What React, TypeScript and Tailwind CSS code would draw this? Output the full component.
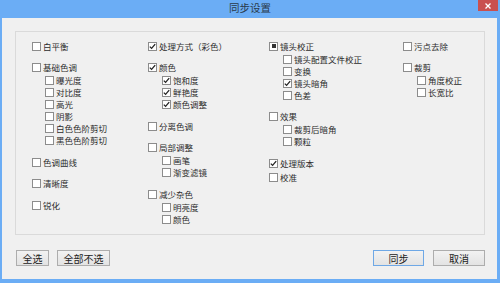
import React from "react";

// 同步设置 dialog (Windows 8 style)

type State = "on" | "off" | "mixed";

type Item = {
  label: string;
  state?: State;
  children?: { label: string; state?: State }[];
  tight?: boolean;
};

const columns: Item[][] = [
  [
    { label: "白平衡" },
    {
      label: "基础色调",
      children: [
        { label: "曝光度" },
        { label: "对比度" },
        { label: "高光" },
        { label: "阴影" },
        { label: "白色色阶剪切" },
        { label: "黑色色阶剪切" },
      ],
    },
    { label: "色调曲线" },
    { label: "清晰度" },
    { label: "锐化" },
  ],
  [
    { label: "处理方式（彩色）", state: "on" },
    {
      label: "颜色",
      state: "on",
      children: [
        { label: "饱和度", state: "on" },
        { label: "鲜艳度", state: "on" },
        { label: "颜色调整", state: "on" },
      ],
    },
    { label: "分离色调" },
    { label: "局部调整", children: [{ label: "画笔" }, { label: "渐变滤镜" }] },
    { label: "减少杂色", children: [{ label: "明亮度" }, { label: "颜色" }] },
  ],
  [
    {
      label: "镜头校正",
      state: "mixed",
      children: [
        { label: "镜头配置文件校正" },
        { label: "变换" },
        { label: "镜头暗角", state: "on" },
        { label: "色差" },
      ],
    },
    { label: "效果", children: [{ label: "裁剪后暗角" }, { label: "颗粒" }] },
    { label: "处理版本", state: "on" },
    { label: "校准", tight: true },
  ],
  [
    { label: "污点去除" },
    { label: "裁剪", children: [{ label: "角度校正" }, { label: "长宽比" }] },
  ],
];

function Box({ state = "off" }: { state?: State }) {
  return (
    <span className="flex h-[9px] w-[9px] shrink-0 items-center justify-center border border-[#8c8c8c] bg-white">
      {state === "on" && (
        <svg width="7" height="7" viewBox="0 0 7 7">
          <path d="M0.8 3.6 L2.6 5.4 L6.2 1.2" fill="none" stroke="#222" strokeWidth="1.3" />
        </svg>
      )}
      {state === "mixed" && <span className="h-[4px] w-[4px] bg-[#333]" />}
    </span>
  );
}

function Row({ label, state }: { label: string; state?: State }) {
  return (
    <div className="flex h-[12px] items-center gap-[2px] whitespace-nowrap text-[8.5px] text-[#2c2c2c]">
      <Box state={state} />
      <span>{label}</span>
    </div>
  );
}

function Button({ label, primary, w }: { label: string; primary?: boolean; w: string }) {
  return (
    <div
      className={`flex h-[16px] items-center justify-center border bg-gradient-to-b from-[#f2f2f2] to-[#e3e3e3] text-[10px] text-[#222] ${w} ${
        primary ? "border-[#6ea8e6]" : "border-[#adadad]"
      }`}
    >
      {label}
    </div>
  );
}

export default function App() {
  return (
    <div
      className="flex h-[283px] w-[500px] flex-col bg-[#6badf5]"
      style={{ fontFamily: '"Noto Sans CJK SC", "Noto Sans", sans-serif' }}
    >
      {/* title bar */}
      <div className="relative flex h-[18px] shrink-0 items-start justify-center">
        <span className="mt-[1px] text-[10.5px] leading-[14px] text-[#2a3a4a]">同步设置</span>
        <div className="absolute right-[2px] top-0 flex h-[11px] w-[20px] items-center justify-center bg-[#c9504f]">
          <svg width="6" height="6" viewBox="0 0 6 6">
            <path d="M0.5 0.5 L5.5 5.5 M5.5 0.5 L0.5 5.5" stroke="#fff" strokeWidth="1.3" />
          </svg>
        </div>
      </div>

      {/* body */}
      <div className="mx-[2px] mb-[4px] mr-[3px] flex flex-1 flex-col bg-[#f0f0f0] px-[13px] pt-[13px]">
        <div className="grid h-[204px] w-[470px] grid-cols-[116px_121px_134px_1fr] border border-[#dadada] pl-[16px] pt-[8px]">
          {columns.map((col, ci) => (
            <div key={ci} className="flex flex-col">
              {col.map((item, ii) => (
                <div
                  key={ii}
                  className={ii === 0 ? "" : item.tight ? "mt-[2px]" : "mt-[9.5px]"}
                >
                  <Row label={item.label} state={item.state} />
                  {item.children && (
                    <div className={`mt-[1px] ${ci === 0 ? "pl-[13px]" : "pl-[14px]"}`}>
                      {item.children.map((c, k) => (
                        <Row key={k} label={c.label} state={c.state} />
                      ))}
                    </div>
                  )}
                </div>
              ))}
            </div>
          ))}
        </div>

        <div className="mt-[15px] flex items-center">
          <div className="ml-[1px] flex gap-[8px]">
            <Button label="全选" w="w-[33px]" />
            <Button label="全部不选" w="w-[53px]" />
          </div>
          <div className="ml-auto mr-[-1px] flex gap-[9px]">
            <Button label="同步" primary w="w-[51px]" />
            <Button label="取消" w="w-[52px]" />
          </div>
        </div>
      </div>
    </div>
  );
}
